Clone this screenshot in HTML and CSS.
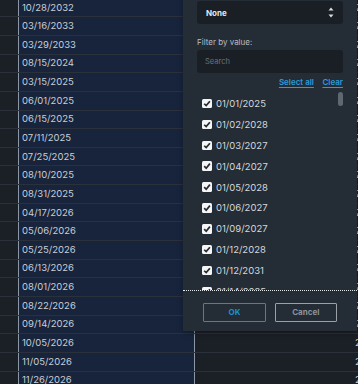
FILE: index.html
```html
<!DOCTYPE html>
<html lang="en">

<head>
    <meta charset="UTF-8">
    <meta name="viewport" content="width=device-width, initial-scale=1.0">
    <title>Date filter</title>
    <link rel="stylesheet" href="styles.css">
</head>

<body>
    <div class="grid">
        <div class="row"><div class="cell-a"></div><div class="cell-date">10/28/2032</div><div class="cell-b">2</div></div>
        <div class="row"><div class="cell-a"></div><div class="cell-date">03/16/2033</div><div class="cell-b">2</div></div>
        <div class="row"><div class="cell-a"></div><div class="cell-date">03/29/2033</div><div class="cell-b">2</div></div>
        <div class="row"><div class="cell-a"></div><div class="cell-date">08/15/2024</div><div class="cell-b">2</div></div>
        <div class="row"><div class="cell-a"></div><div class="cell-date">03/15/2025</div><div class="cell-b">2</div></div>
        <div class="row"><div class="cell-a"></div><div class="cell-date">06/01/2025</div><div class="cell-b">2</div></div>
        <div class="row"><div class="cell-a"></div><div class="cell-date">06/15/2025</div><div class="cell-b">2</div></div>
        <div class="row"><div class="cell-a"></div><div class="cell-date">07/11/2025</div><div class="cell-b">2</div></div>
        <div class="row"><div class="cell-a"></div><div class="cell-date">07/25/2025</div><div class="cell-b">2</div></div>
        <div class="row"><div class="cell-a"></div><div class="cell-date">08/10/2025</div><div class="cell-b">2</div></div>
        <div class="row"><div class="cell-a"></div><div class="cell-date">08/31/2025</div><div class="cell-b">2</div></div>
        <div class="row"><div class="cell-a"></div><div class="cell-date">04/17/2026</div><div class="cell-b">2</div></div>
        <div class="row"><div class="cell-a"></div><div class="cell-date">05/06/2026</div><div class="cell-b">2</div></div>
        <div class="row"><div class="cell-a"></div><div class="cell-date">05/25/2026</div><div class="cell-b">2</div></div>
        <div class="row"><div class="cell-a"></div><div class="cell-date">06/13/2026</div><div class="cell-b">2</div></div>
        <div class="row"><div class="cell-a"></div><div class="cell-date">08/01/2026</div><div class="cell-b">2</div></div>
        <div class="row"><div class="cell-a"></div><div class="cell-date">08/22/2026</div><div class="cell-b">2</div></div>
        <div class="row"><div class="cell-a"></div><div class="cell-date">09/14/2026</div><div class="cell-b">2</div></div>
        <div class="row"><div class="cell-a"></div><div class="cell-date">10/05/2026</div><div class="cell-b">2</div></div>
        <div class="row"><div class="cell-a"></div><div class="cell-date">11/05/2026</div><div class="cell-b">2</div></div>
        <div class="row"><div class="cell-a"></div><div class="cell-date">11/26/2026</div><div class="cell-b">2</div></div>
    </div>

    <!-- Filtro da coluna -->
    <div class="popup">
        <div class="popup-body">
            <div class="select-box">
                <span>None</span>
                <svg class="arrows" width="6" height="11" viewBox="0 0 6 11">
                    <path d="M3 0.5 L5.5 3.5 L0.5 3.5 Z" fill="#d8dde2" />
                    <path d="M3 10.5 L5.5 7.5 L0.5 7.5 Z" fill="#d8dde2" />
                </svg>
            </div>
            <div class="filter-label">Filter by value:</div>
            <div class="search-box">Search</div>
            <div class="links">
                <a href="#">Select all</a>
                <a href="#">Clear</a>
            </div>
        </div>

        <div class="value-list">
            <div class="thumb"></div>
            <div class="item"><span class="check"></span>01/01/2025</div>
            <div class="item"><span class="check"></span>01/02/2028</div>
            <div class="item"><span class="check"></span>01/03/2027</div>
            <div class="item"><span class="check"></span>01/04/2027</div>
            <div class="item"><span class="check"></span>01/05/2028</div>
            <div class="item"><span class="check"></span>01/06/2027</div>
            <div class="item"><span class="check"></span>01/09/2027</div>
            <div class="item"><span class="check"></span>01/12/2028</div>
            <div class="item"><span class="check"></span>01/12/2031</div>
            <div class="item"><span class="check"></span>01/14/2025</div>
        </div>

        <div class="buttons">
            <button class="btn-ok">OK</button>
            <button class="btn-cancel">Cancel</button>
        </div>
    </div>
</body>

</html>
```

FILE: styles.css
```css
body {
    margin: 0;
    width: 358px;
    height: 384px;
    overflow: hidden;
    position: relative;
    background-color: #1b1f26;
    font-family: Inter, "Noto Sans", sans-serif;
    font-size: 9.5px;
}

.grid {
    margin-top: -1.3px;
}

.row {
    display: flex;
    height: 18.65px;
    box-sizing: border-box;
    border-bottom: 1px solid #2b313a;
}

.cell-a {
    width: 18px;
    flex: none;
}

.cell-date {
    flex: none;
    width: 177px;
    box-sizing: border-box;
    background-color: #17243c;
    border-left: 1px solid #8b97a4;
    border-right: 1px solid #8b97a4;
    color: #c9cfd7;
    padding-left: 3px;
    padding-bottom: 1px;
    display: flex;
    align-items: center;
}

.cell-b {
    flex: 1;
    color: #c9cfd7;
    padding-left: 160px;
    padding-bottom: 1px;
    display: flex;
    align-items: center;
    white-space: nowrap;
    overflow: hidden;
}

.popup {
    position: absolute;
    left: 183px;
    top: -10px;
    width: 174px;
    background-color: #242c35;
    box-shadow: 0 2px 6px rgba(0, 0, 0, 0.3);
}

.popup-body {
    padding: 11px 14px 0;
}

.select-box {
    height: 23.3px;
    background-color: #1a1f26;
    border-radius: 3px;
    display: flex;
    align-items: center;
    justify-content: space-between;
    padding: 0 9px;
    color: #e4e7ea;
    font-size: 8px;
    font-weight: 700;
}

.arrows {
    display: block;
}

.filter-label {
    margin-top: 13px;
    line-height: 10px;
    font-size: 8px;
    color: #b8bfc7;
}

.search-box {
    margin-top: 2.7px;
    height: 23.3px;
    background-color: #1a1f26;
    border-radius: 3px;
    display: flex;
    align-items: center;
    padding-left: 8px;
    color: #6b737c;
    font-size: 7.5px;
}

.links {
    margin-top: 4px;
    line-height: 10px;
    display: flex;
    justify-content: flex-end;
    gap: 8.5px;
    font-size: 8px;
    font-weight: 600;
}

.links a {
    color: #2a9bd8;
    text-decoration: underline;
    text-underline-offset: 2px;
}

.value-list {
    position: relative;
    margin-top: 3.7px;
    height: 200px;
    overflow: hidden;
    padding-top: 2.3px;
    box-sizing: border-box;
    border-bottom: 1px dotted #e3e6e9;
}

.thumb {
    position: absolute;
    left: 155px;
    top: 1px;
    width: 4.5px;
    height: 14.5px;
    border-radius: 3px;
    background-color: #5e6873;
}

.item {
    height: 20.85px;
    display: flex;
    align-items: center;
    padding-left: 19px;
    color: #d3d8dd;
}

.check {
    width: 9.5px;
    height: 9.5px;
    margin-right: 4.5px;
    background-color: #f4f5f6;
    border-radius: 1.5px;
    flex: none;
    background-image: url("data:image/svg+xml,%3Csvg xmlns='http://www.w3.org/2000/svg' viewBox='0 0 10 10'%3E%3Cpath d='M2.2 5.2 L4.2 7.3 L7.9 2.6' fill='none' stroke='%23262b31' stroke-width='1.7'/%3E%3C/svg%3E");
}

.buttons {
    display: flex;
    gap: 8.5px;
    padding: 12px 0 9px 20px;
}

button {
    height: 18.7px;
    background-color: transparent;
    font-family: inherit;
    font-size: 8px;
    font-weight: 700;
    border-radius: 1px;
    padding: 0;
}

.btn-ok {
    width: 63px;
    border: 1px solid #1b8fcf;
    color: #1b8fcf;
}

.btn-cancel {
    width: 62.5px;
    border: 1px solid #9aa0a6;
    color: #8c939a;
}
```
